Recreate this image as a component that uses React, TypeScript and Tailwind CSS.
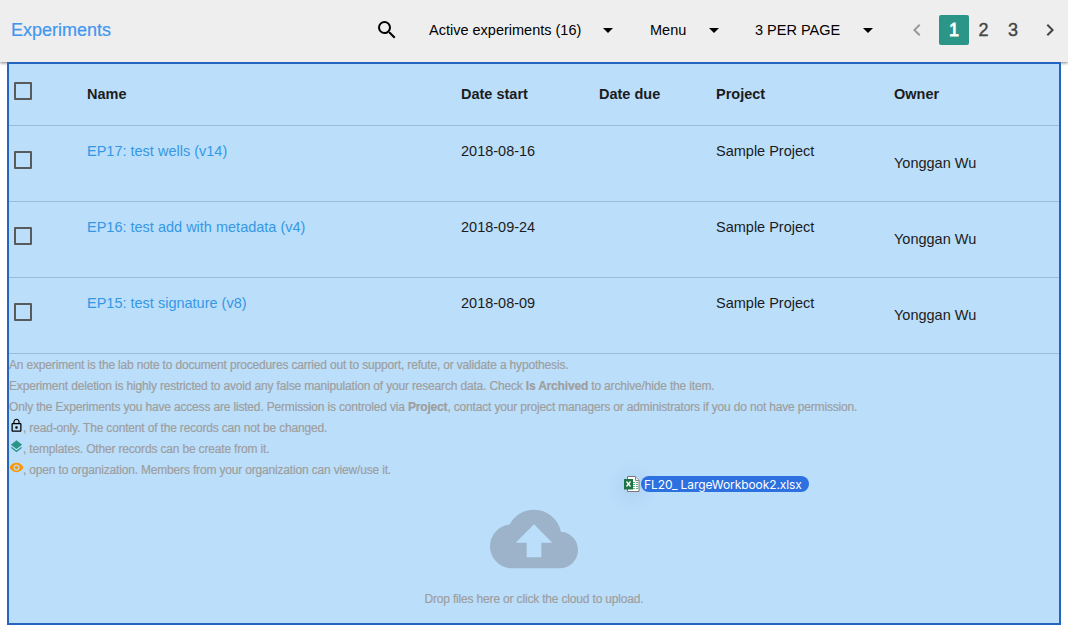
import React from "react";
import { MdArrowDropDown, MdChevronLeft, MdChevronRight, MdCloudUpload, MdLayers, MdSearch, MdVisibility } from "react-icons/md";

const experiments = [
  { name: "EP17: test wells (v14)", start: "2018-08-16", due: "", project: "Sample Project", owner: "Yonggan Wu" },
  { name: "EP16: test add with metadata (v4)", start: "2018-09-24", due: "", project: "Sample Project", owner: "Yonggan Wu" },
  { name: "EP15: test signature (v8)", start: "2018-08-09", due: "", project: "Sample Project", owner: "Yonggan Wu" },
];

const columns = "grid grid-cols-[78px_374px_138px_117px_178px_1fr]";

function Checkbox({ className = "" }: { className?: string }) {
  return <span role="checkbox" aria-checked="false" className={`ml-[5px] block size-[18px] rounded-[1px] border-2 border-[#5a5a5a] ${className}`} />;
}

function Dropdown({ label, className }: { label: string; className: string }) {
  return (
    <button className={`flex shrink-0 items-center justify-between whitespace-nowrap text-[14.5px] text-black ${className}`}>
      <span className="pt-[2px]">{label}</span>
      <MdArrowDropDown size={24} />
    </button>
  );
}

function Toolbar() {
  return (
    <header className="flex h-[62px] items-center bg-[#eeeeee] pb-[2px] pl-[11px] shadow-[0_1px_3px_rgba(0,0,0,0.5)]">
      <h1 className="w-[364px] shrink-0 text-[18px] text-[#4296f0] [-webkit-text-stroke:0.2px_#4296f0]">Experiments</h1>
      <MdSearch size={24} className="shrink-0 text-black" />
      <Dropdown label="Active experiments (16)" className="ml-[30px] w-[191px]" />
      <Dropdown label="Menu" className="ml-[30px] w-[76px]" />
      <Dropdown label="3 PER PAGE" className="ml-[29px] w-[125px]" />
      <nav className="ml-[25px] flex shrink-0 items-center text-[18px] text-[#444444]">
        <MdChevronLeft size={24} className="text-[#999999]" />
        <span className="ml-[10px] flex h-[30px] w-[30px] items-center justify-center rounded-[2px] bg-[#2b9688] text-white [-webkit-text-stroke:0.8px_white]">1</span>
        <span className="w-[29px] text-center [-webkit-text-stroke:0.4px_#444]">2</span>
        <span className="w-[30px] text-center [-webkit-text-stroke:0.4px_#444]">3</span>
        <MdChevronRight size={24} className="ml-[10px]" />
      </nav>
    </header>
  );
}

function LockIcon() {
  return (
    <svg viewBox="0 0 24 24" className="size-[15px] fill-black">
      <path d="M12 17c1.1 0 2-.9 2-2s-.9-2-2-2-2 .9-2 2 .9 2 2 2zm6-9h-1V6c0-2.76-2.24-5-5-5S7 3.24 7 6v2H6c-1.1 0-2 .9-2 2v10c0 1.1.9 2 2 2h12c1.1 0 2-.9 2-2V10c0-1.1-.9-2-2-2zM8.900 6c0-1.710 1.390-3.100 3.100-3.100s3.100 1.390 3.100 3.100v2H8.900V6zM18 20H6V10h12v10z" />
    </svg>
  );
}

function Legend({ icon, children }: { icon: React.ReactNode; children: React.ReactNode }) {
  return (
    <div className="flex h-[21px] items-start">
      <span className="mr-[-1px] flex w-[15px] shrink-0 justify-center">{icon}</span>
      <span>{children}</span>
    </div>
  );
}

function ExcelIcon() {
  return (
    <svg viewBox="0 0 16 16" className="size-4 shrink-0">
      <path d="M3.500.5h8l3.500 4v11h-11.500z" fill="#fff" stroke="#777" />
      <path d="M11.500.5v4h3.500" fill="#eee" stroke="#888" />
      <path d="M9 6.500h2M12 6.500h2M9 8.500h2M12 8.500h2M9 10.500h2M12 10.500h2M9 12.500h2M12 12.500h2" stroke="#65ad83" />
      <path d="M0 3h9v10.500H0z" fill="#207347" />
      <path d="M2.500 5.500l4 5M6.500 5.500l-4 5" stroke="#fff" strokeWidth="1.300" />
    </svg>
  );
}

export default function App() {
  return (
    <div className="relative h-[633px] w-[1068px] overflow-hidden bg-white font-['Liberation_Sans',Arial,sans-serif]">
      <Toolbar />
      <main className="relative ml-[7px] flex h-[563px] w-[1054px] flex-col border-2 border-[#2365c0] bg-[#bbdefb] text-[14.500px] text-[#1c1c1c]">
        <div className={`h-[62px] shrink-0 border-b border-[#9cbcd6] font-bold ${columns}`}>
          <Checkbox className="mt-[18px]" />
          {["Name", "Date start", "Date due", "Project", "Owner"].map((title) => (
            <span key={title} className="mt-5 leading-[20px]">{title}</span>
          ))}
        </div>
        {experiments.map((item) => (
          <div key={item.name} className={`h-[76px] shrink-0 border-b border-[#9cbcd6] leading-[20px] ${columns}`}>
            <Checkbox className="mt-[25px]" />
            <a className="mt-[15px] text-[#3598e4]">{item.name}</a>
            <span className="mt-[15px]">{item.start}</span>
            <span className="mt-[15px]">{item.due}</span>
            <span className="mt-[15px]">{item.project}</span>
            <span className="mt-[27px]">{item.owner}</span>
          </div>
        ))}
        <section className="whitespace-nowrap pt-px text-[12px] leading-[21px] tracking-[-0.172px] text-[#9e9e9e] [-webkit-text-stroke:0.2px_#9e9e9e]">
          <p>An experiment is the lab note to document procedures carried out to support, refute, or validate a hypothesis.</p>
          <p>Experiment deletion is highly restricted to avoid any false manipulation of your research data. Check <b>Is Archived</b> to archive/hide the item.</p>
          <p>Only the Experiments you have access are listed. Permission is controled via <b>Project</b>, contact your project managers or administrators if you do not have permission.</p>
          <Legend icon={<LockIcon />}>, read-only. The content of the records can not be changed.</Legend>
          <Legend icon={<MdLayers size={15} className="text-[#2b9688]" />}>, templates. Other records can be create from it.</Legend>
          <Legend icon={<MdVisibility size={15} className="text-[#fb9802]" />}>, open to organization. Members from your organization can view/use it.</Legend>
        </section>
        <section className="flex flex-col items-center pt-[14px] text-[12px] leading-[21px] tracking-[-0.172px] text-[#9e9e9e]">
          <MdCloudUpload size={88} className="text-[#9cb3c9]" />
          <p className="mt-[6px] [-webkit-text-stroke:0.2px_#9e9e9e]">Drop files here or click the cloud to upload.</p>
        </section>
      </main>
      <div className="absolute left-[624px] top-[476px] flex h-4 items-center gap-px">
        <span className="rounded-full shadow-[0_3px_18px_4px_rgba(60,100,140,0.12)]"><ExcelIcon /></span>
        <span className="h-4 w-[168px] whitespace-nowrap rounded-full bg-[#2d70df] pl-[3px] font-[Inter,sans-serif] text-[12px] leading-[17px] tracking-[-0.08px] text-white">FL20_ LargeWorkbook2.xlsx</span>
      </div>
    </div>
  );
}
